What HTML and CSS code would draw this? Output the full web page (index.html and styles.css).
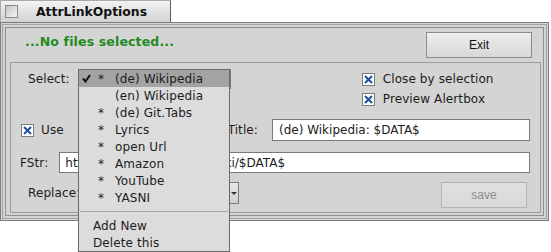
FILE: index.html
```html
<!DOCTYPE html>
<html>
  <head>
    <title>AttrLinkOptions</title>

    <link rel="stylesheet" href="styles.css">
  </head>
  <body>
    <div class="tab">
      <span class="tab-icon"></span>
      <span class="tab-title">AttrLinkOptions</span>
    </div>
    <div class="window">
      <div class="frame">
        <div class="panel">
          <div class="top-row">
            <span class="status">...No files selected...</span>
            <button class="btn exit-button">Exit</button>
          </div>
          <div class="group">
            <div class="row select-row">
              <span class="label select-label">Select:</span>
              <div class="combo select-combo"></div>
              <div class="options">
                <label class="check">
                  <svg class="box" width="13" height="13" viewBox="0 0 13 13"><rect x="0.5" y="0.5" width="12" height="12" fill="#fff" stroke="#7d7d7d"/><path d="M3 3L10 10M10 3L3 10" stroke="#1d4f9c" stroke-width="2"/></svg>
                  Close by selection
                </label>
                <label class="check">
                  <svg class="box" width="13" height="13" viewBox="0 0 13 13"><rect x="0.5" y="0.5" width="12" height="12" fill="#fff" stroke="#7d7d7d"/><path d="M3 3L10 10M10 3L3 10" stroke="#1d4f9c" stroke-width="2"/></svg>
                  Preview Alertbox
                </label>
              </div>
            </div>
            <div class="row title-row">
              <label class="check use-check">
                <svg class="box" width="13" height="13" viewBox="0 0 13 13"><rect x="0.5" y="0.5" width="12" height="12" fill="#fff" stroke="#7d7d7d"/><path d="M3 3L10 10M10 3L3 10" stroke="#1d4f9c" stroke-width="2"/></svg>
                Use
              </label>
              <span class="label title-label">Title:</span>
              <input class="field title-field" type="text" value="(de) Wikipedia: $DATA$">
            </div>
            <div class="row fstr-row">
              <span class="label fstr-label">FStr:</span>
              <input class="field fstr-field" type="text" value="https://de.wikipedia.org/wiki/$DATA$">
            </div>
            <div class="row replace-row">
              <span class="label replace-label">Replace:</span>
              <div class="combo replace-combo"><span class="combo-arrow"></span></div>
              <button class="btn save-button" disabled>save</button>
            </div>
          </div>
        </div>
      </div>
    </div>

    <!-- open popup of the Select combo -->
    <ul class="menu">
      <li class="menu-item active">
        <span class="mark"><svg width="9" height="9" viewBox="0 0 9 9"><path d="M1 4.5L3.5 7.5L8 1" fill="none" stroke="#111" stroke-width="2"/></svg></span>
        <span class="star">*</span>(de) Wikipedia
      </li>
      <li class="menu-item"><span class="mark"></span><span class="star"></span>(en) Wikipedia</li>
      <li class="menu-item"><span class="mark"></span><span class="star">*</span>(de) Git.Tabs</li>
      <li class="menu-item"><span class="mark"></span><span class="star">*</span>Lyrics</li>
      <li class="menu-item"><span class="mark"></span><span class="star">*</span>open Url</li>
      <li class="menu-item"><span class="mark"></span><span class="star">*</span>Amazon</li>
      <li class="menu-item"><span class="mark"></span><span class="star">*</span>YouTube</li>
      <li class="menu-item"><span class="mark"></span><span class="star">*</span>YASNI</li>
      <li class="menu-separator"></li>
      <li class="menu-item action">Add New</li>
      <li class="menu-item action">Delete this</li>
    </ul>
  </body>
</html>
```

FILE: styles.css
```css
* {
  box-sizing: border-box;
}

body {
  margin: 0;
  width: 551px;
  height: 252px;
  overflow: hidden;
  position: relative;
  background: #fff;
  font-family: "DejaVu Sans", sans-serif;
  font-size: 12px;
  letter-spacing: 0.1px;
  color: #1c1c1c;
}

/* title tab */
.tab {
  display: flex;
  align-items: center;
  width: 171px;
  height: 22px;
  padding-left: 4px;
  border: 1px solid #a9a9a9;
  border-right-color: #5e5e5e;
  border-bottom: none;
  background: linear-gradient(#f3f3f3, #d2d2d2);
}

.tab-icon {
  width: 13px;
  height: 13px;
  border: 1px solid #8a8a8a;
  background: linear-gradient(135deg, #c4c4c4, #f6f6f6);
}

.tab-title {
  margin-left: 18px;
  font-weight: bold;
  font-size: 12.4px;
  letter-spacing: 0;
  color: #111;
}

/* window frame */
.window {
  width: 549px;
  height: 199px;
  padding: 1px;
  border: 1px solid #7c7c7c;
  background: #d4d4d4;
}

.frame {
  height: 100%;
  padding: 2px;
  border: 1px solid #a2a2a2;
}

.panel {
  display: flex;
  flex-direction: column;
  height: 100%;
  padding: 0 2px 2px 4px;
  border: 1px solid #8f8f8f;
}

.top-row {
  display: flex;
  align-items: flex-start;
  height: 34px;
}

.status {
  margin: 4px 0 0 15px;
  line-height: 20px;
  font-weight: bold;
  font-size: 12.5px;
  letter-spacing: 0.15px;
  color: #1f8c1f;
}

.btn {
  padding: 0;
  font-family: "Liberation Sans", Arial, sans-serif;
  font-size: 12px;
  letter-spacing: 0;
  color: #111;
  border: 1px solid #8c8c8c;
  background: linear-gradient(#efefef, #e2e2e2 50%, #d8d8d8);
}

.btn:disabled {
  color: #8c8c8c;
  border-color: #b4b4b4;
  background: linear-gradient(#e0e0e0, #d8d8d8);
}

.exit-button {
  width: 106px;
  height: 26px;
  margin: 4px 9px 0 auto;
}

/* options group */
.group {
  display: flex;
  flex-direction: column;
  flex: 1;
  padding: 6px 10px 4px 0;
  border: 1px solid #9c9c9c;
}

.row {
  display: flex;
}

.label {
  line-height: 20px;
  white-space: nowrap;
}

.select-row {
  align-items: flex-start;
  height: 40px;
}

.select-label {
  margin-left: 17px;
}

.combo {
  position: relative;
  border: 1px solid #7a7a7a;
  background: linear-gradient(#ebebeb, #d6d6d6);
}

.select-combo {
  width: 152px;
  height: 20px;
  margin-left: 9px;
}

.options {
  display: flex;
  flex-direction: column;
  margin-left: 131px;
}

.check {
  display: flex;
  align-items: center;
  line-height: 20px;
  white-space: nowrap;
}

.box {
  margin-right: 8px;
  flex: none;
}

.title-row {
  align-items: center;
  height: 22px;
  margin-top: 10px;
}

.use-check {
  margin-left: 10px;
}

.use-check .box {
  margin-right: 7px;
}

.title-label {
  margin: 0 14px 0 auto;
}

.field {
  height: 22px;
  padding: 0 0 0 6px;
  border: 1px solid #7a7a7a;
  background: #fff;
  font-family: "DejaVu Sans", sans-serif;
  font-size: 12px;
  letter-spacing: 0;
  color: #1c1c1c;
}

.title-field {
  width: 258px;
}

.fstr-row {
  align-items: center;
  height: 21px;
  margin-top: 11px;
}

.fstr-label {
  margin-left: 9px;
}

.fstr-field {
  flex: 1;
  height: 21px;
  margin-left: 11px;
  padding-left: 5px;
}

.replace-row {
  align-items: flex-start;
  height: 26px;
  margin-top: 9px;
}

.replace-label {
  margin-left: 17px;
  line-height: 22px;
}

.replace-combo {
  width: 153px;
  height: 22px;
  margin-left: 6px;
}

.combo-arrow {
  position: absolute;
  right: 0;
  top: 0;
  bottom: 0;
  width: 10px;
  border-left: 1px solid #9a9a9a;
  background: linear-gradient(#e8e8e8, #d0d0d0);
}

.combo-arrow::after {
  content: "";
  position: absolute;
  left: 2px;
  top: 9px;
  border-left: 3px solid transparent;
  border-right: 3px solid transparent;
  border-top: 3px solid #333;
}

.save-button {
  width: 86px;
  height: 26px;
  margin: 0 3px 0 auto;
}

/* popup menu */
.menu {
  position: absolute;
  left: 78px;
  top: 69px;
  width: 152px;
  margin: 0;
  padding: 0;
  list-style: none;
  border: 1px solid #6a6a6a;
  background: #dcdcdc;
}

.menu-item {
  display: flex;
  align-items: center;
  height: 17px;
  padding-left: 3px;
  white-space: nowrap;
}

.menu-item.active {
  background: #a3a3a3;
}

.mark {
  display: flex;
  align-items: center;
  width: 16px;
}

.star {
  width: 17px;
}

.menu-separator {
  height: 6px;
  margin: 0 1px 5px;
  border-bottom: 1px solid #a6a6a6;
}

.menu-item.action {
  padding-left: 14px;
}
```
